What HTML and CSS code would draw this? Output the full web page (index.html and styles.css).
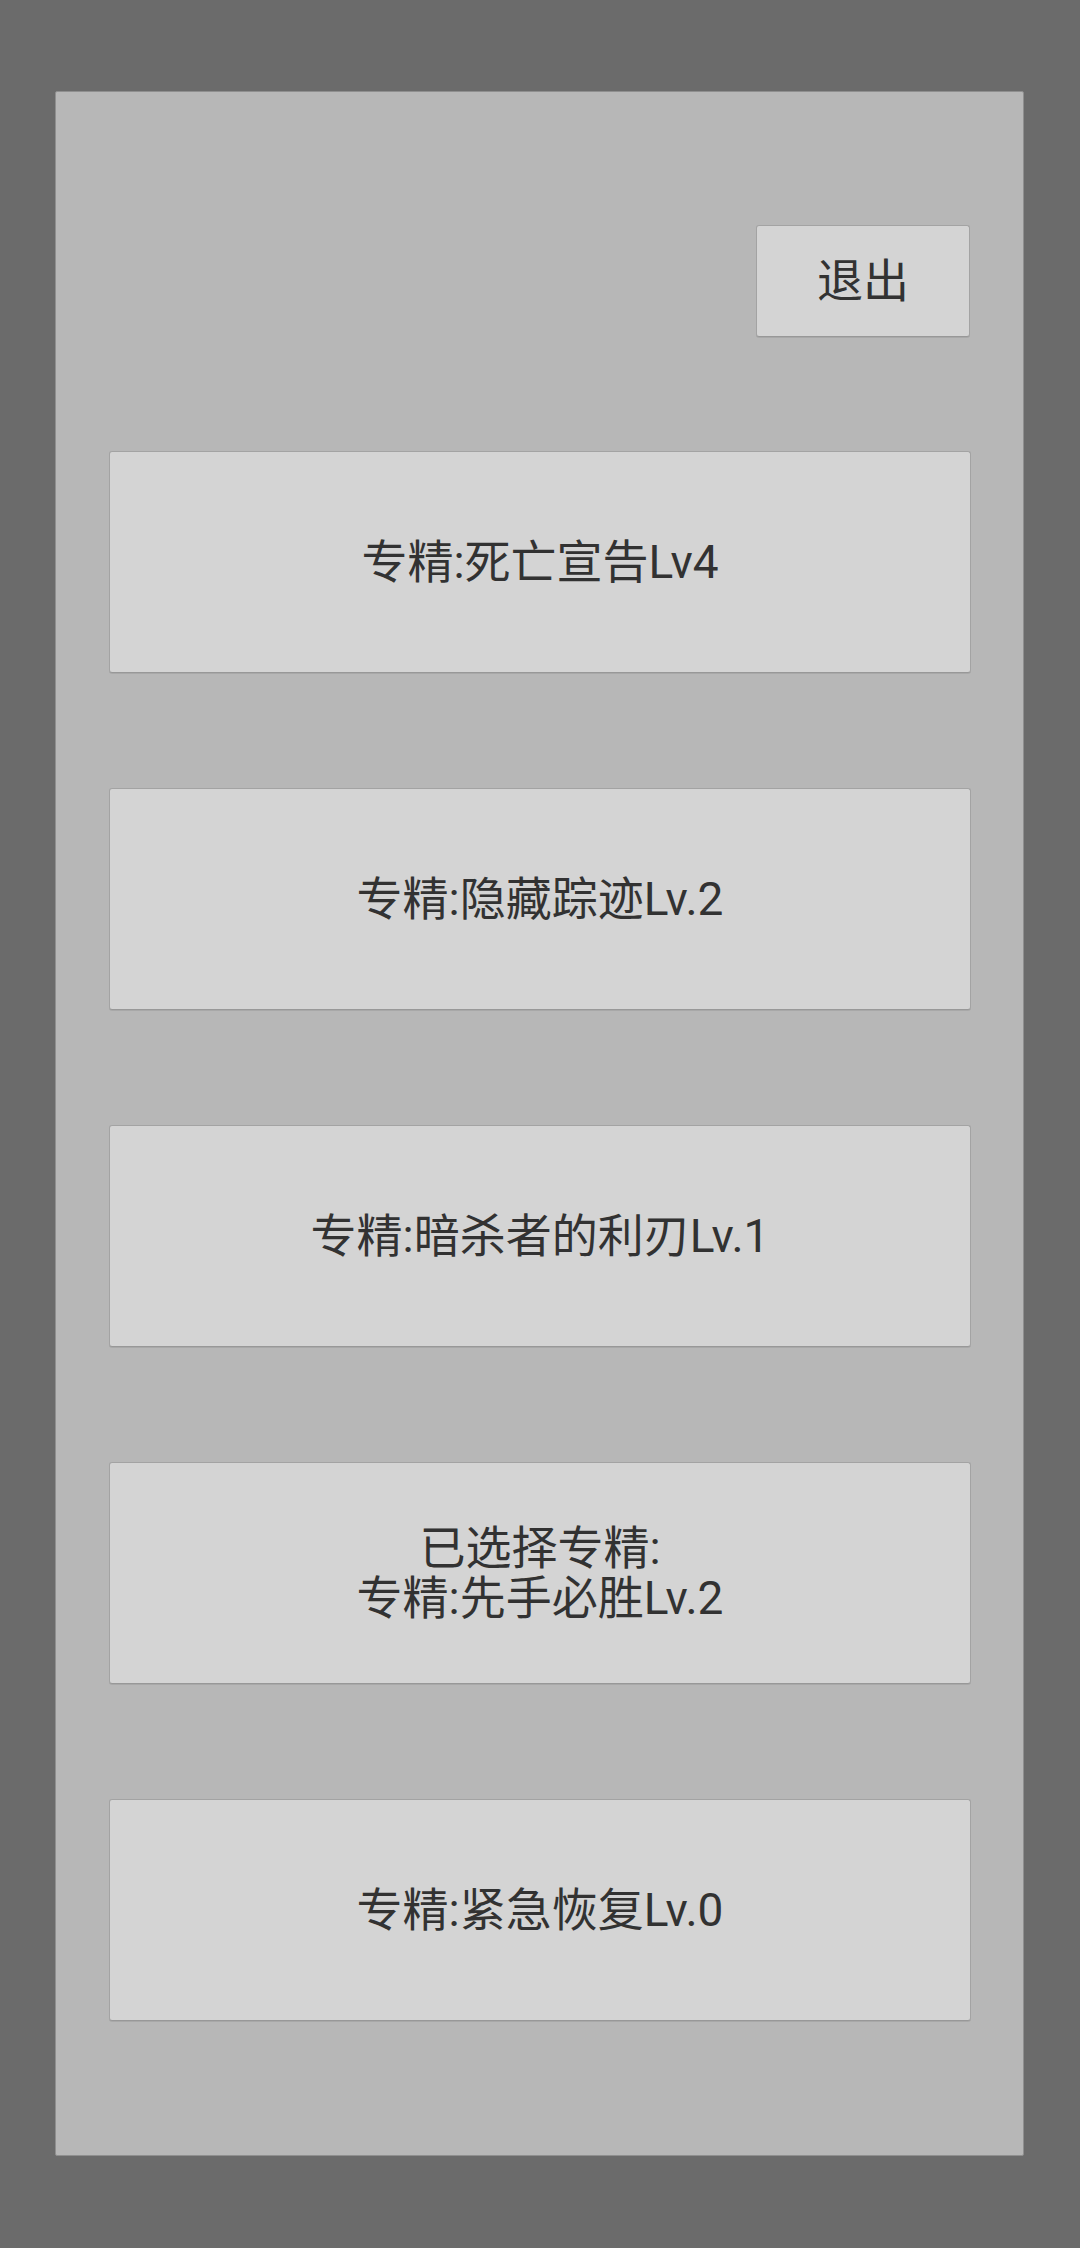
FILE: index.html
```html
<!DOCTYPE html>
<html lang="zh-CN">
<head>
<meta charset="utf-8">
<title>专精</title>
<link rel="stylesheet" href="styles.css">
</head>
<body>
<div class="panel">
  <div class="header">
    <button class="btn exit">退出</button>
  </div>
  <div class="list">
    <button class="btn item">专精:死亡宣告Lv4</button>
    <button class="btn item">专精:隐藏踪迹Lv.2</button>
    <button class="btn item">专精:暗杀者的利刃Lv.1</button>
    <button class="btn item"><span class="line">已选择专精:</span><span class="line">专精:先手必胜Lv.2</span></button>
    <button class="btn item">专精:紧急恢复Lv.0</button>
  </div>
</div>
</body>
</html>
```

FILE: styles.css
```css
html, body {
  margin: 0;
  padding: 0;
  background: #6b6b6b;
  width: 1080px;
  height: 2248px;
  overflow: hidden;
}
body {
  font-family: Roboto, "Noto Sans CJK SC", sans-serif;
}
.panel {
  box-sizing: border-box;
  margin: 91px 0 0 55px;
  width: 969px;
  height: 2065px;
  background: #b7b7b7;
  border: 1px solid #8f8f8f;
  border-radius: 2px;
  padding: 133px 53px 0 53px;
  display: flex;
  flex-direction: column;
}
.header {
  display: flex;
  justify-content: flex-end;
  margin-bottom: 114px;
}
.list {
  display: flex;
  flex-direction: column;
  gap: 115px;
}
.btn {
  box-sizing: border-box;
  margin: 0;
  padding: 0;
  background: #d4d4d4;
  border: 1px solid #a3a3a3;
  border-bottom-color: #989898;
  border-radius: 3px;
  box-shadow: 0 1px 0 rgba(0, 0, 0, 0.08);
  color: #323232;
  font-family: Roboto, "Noto Sans CJK SC", sans-serif;
  font-size: 46px;
  line-height: 50px;
  text-align: center;
}
.line {
  display: block;
  height: 50px;
}
.exit {
  width: 214px;
  height: 112px;
}
.item {
  width: 862px;
  height: 222px;
}
```
